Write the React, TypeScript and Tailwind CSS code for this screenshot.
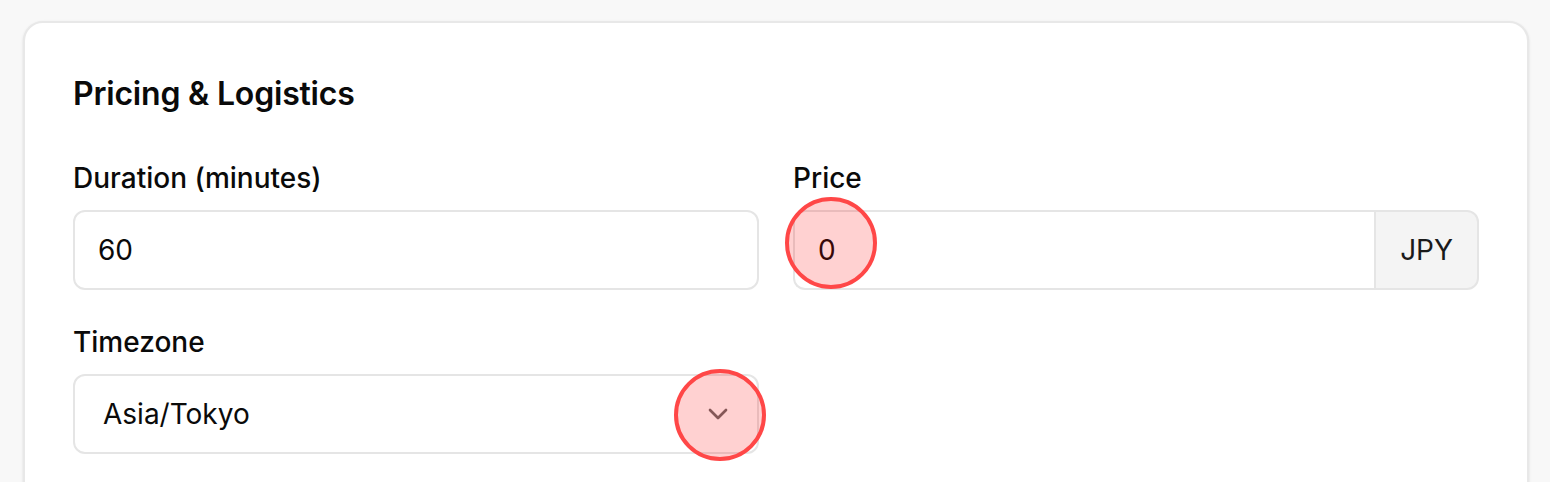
import React from 'react';
import { ChevronDown } from 'lucide-react';

function Marker({ className }: { className: string }) {
  return (
    <div
      className={`pointer-events-none absolute h-[92px] w-[92px] rounded-full border-4 border-[#ff4747] bg-[rgba(255,0,0,0.18)] ${className}`}
    />
  );
}

export default function App() {
  return (
    <div className="h-[482px] overflow-hidden bg-[#f8f8f8] pt-[21px] pl-[23px] font-['Inter',sans-serif] text-[#0a0a0a]">
      <div className="w-[1506px] rounded-[20px] border-2 border-[#e8e8e8] bg-white p-[48px] shadow-sm">
        <h2 className="mb-[42px] text-[32px] leading-[45px] font-semibold tracking-[-0.2px]">Pricing &amp; Logistics</h2>

        <div className="grid grid-cols-2 gap-x-[34px] gap-y-[32px]">
          <div>
            <label className="mb-[12px] block text-[28px] leading-[40px] font-medium">Duration (minutes)</label>
            <input
              type="number"
              defaultValue={60}
              className="h-[80px] w-full rounded-[12px] border-2 border-[#e5e5e5] px-[23px] text-[28px] outline-none"
            />
          </div>

          <div className="relative">
            <label className="mb-[12px] block text-[28px] leading-[40px] font-medium">Price</label>
            <div className="flex h-[80px]">
              <input
                type="number"
                defaultValue={0}
                className="h-full min-w-0 flex-1 rounded-l-[12px] border-2 border-r-0 border-[#e5e5e5] px-[23px] text-[28px] outline-none"
              />
              <span className="flex items-center rounded-r-[12px] border-2 border-[#e5e5e5] bg-[#f4f4f4] px-[24px] text-[28px] text-[#1a1a1a]">
                JPY
              </span>
            </div>
            <Marker className="left-[-8px] top-[39px]" />
          </div>

          <div className="relative">
            <label className="mb-[12px] block text-[28px] leading-[40px] font-medium">Timezone</label>
            <div className="flex h-[80px] w-full items-center justify-between rounded-[12px] border-2 border-[#e5e5e5] pl-[28px] pr-[23px] text-[28px]">
              <span>Asia/Tokyo</span>
              <ChevronDown size={32} strokeWidth={2} className="text-[#6b6b6b]" />
            </div>
            <Marker className="left-[601px] top-[47px]" />
          </div>
        </div>
      </div>
    </div>
  );
}
